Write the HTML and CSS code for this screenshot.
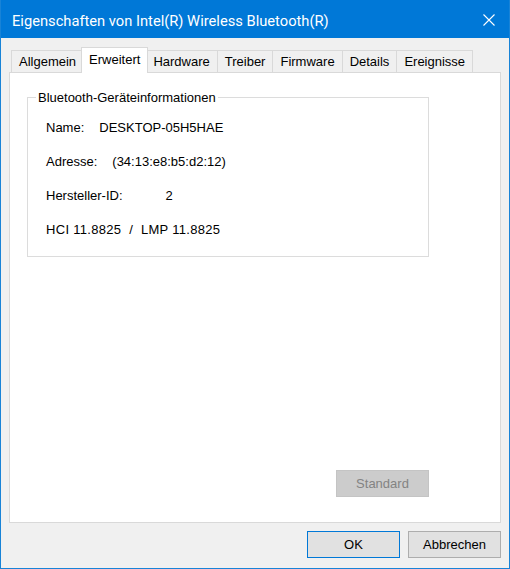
FILE: index.html
```html
<!DOCTYPE html>
<html lang="de">
<head>
  <meta charset="UTF-8">
  <meta name="viewport" content="width=device-width, initial-scale=1.0">
  <title>Eigenschaften von Intel(R) Wireless Bluetooth(R)</title>
  <link rel="stylesheet" href="styles.css">
</head>
<body>
  <div class="window">
    <div class="titlebar">
      <span class="title">Eigenschaften von Intel(R) Wireless Bluetooth(R)</span>
      <button class="close-btn" aria-label="Schließen">
        <svg width="12" height="12" viewBox="0 0 12 12">
          <path d="M0.5 0.5 L11.5 11.5 M11.5 0.5 L0.5 11.5" stroke="#fff" stroke-width="1.1" fill="none"/>
        </svg>
      </button>
    </div>

    <div class="dialog">
      <div class="tabs">
        <div class="tab">Allgemein</div>
        <div class="tab active">Erweitert</div>
        <div class="tab">Hardware</div>
        <div class="tab">Treiber</div>
        <div class="tab">Firmware</div>
        <div class="tab">Details</div>
        <div class="tab">Ereignisse</div>
      </div>

      <div class="panel">
        <fieldset class="group">
          <legend>Bluetooth-Geräteinformationen</legend>
          <div class="info">
            <div class="row"><span>Name:</span><span class="val">DESKTOP-05H5HAE</span></div>
            <div class="row"><span>Adresse:</span><span class="val">(34:13:e8:b5:d2:12)</span></div>
            <div class="row"><span>Hersteller-ID:</span><span class="val wide">2</span></div>
            <div class="row version">HCI 11.8825 &nbsp;/&nbsp; LMP 11.8825</div>
          </div>
        </fieldset>
        <button class="btn standard" disabled>Standard</button>
      </div>

      <div class="actions">
        <button class="btn default">OK</button>
        <button class="btn">Abbrechen</button>
      </div>
    </div>
  </div>
</body>
</html>
```

FILE: styles.css
```css
body {
  margin: 0;
  padding: 0;
  font-family: "Liberation Sans", Arial, sans-serif;
  font-size: 13px;
  color: #000;
  background-color: #fff;
}

.window {
  width: 510px;
  height: 569px;
  box-sizing: border-box;
  border: 1px solid #1883d7;
  border-top: none;
  background-color: #f0f0f0;
  display: flex;
  flex-direction: column;
}

/* Title bar */
.titlebar {
  height: 38px;
  flex-shrink: 0;
  background-color: #0078d7;
  display: flex;
  align-items: center;
  justify-content: space-between;
  padding: 3px 0 0 11px;
  box-sizing: border-box;
}

.title {
  font-family: Roboto, "Liberation Sans", sans-serif;
  font-size: 14.7px;
  color: #fff;
}

.close-btn {
  background: none;
  border: none;
  padding: 0;
  margin: 0 14px 2px 0;
  display: flex;
}

/* Dialog body */
.dialog {
  flex: 1;
  display: flex;
  flex-direction: column;
  padding: 9px 8px 10px;
}

.tabs {
  display: flex;
  align-items: flex-end;
  padding-left: 2px;
  height: 25px;
}

.tab {
  height: 22px;
  box-sizing: border-box;
  border: 1px solid #d9d9d9;
  border-bottom: none;
  padding: 0 7px;
  line-height: 21px;
  margin-right: -1px;
  background-color: #f0f0f0;
  white-space: nowrap;
}

.tab.active {
  position: relative;
  z-index: 1;
  height: 26px;
  line-height: 24px;
  margin: 0 -3px -1px -2px;
  background-color: #fff;
}

.panel {
  flex: 1;
  display: flex;
  flex-direction: column;
  background-color: #fff;
  border: 1px solid #d9d9d9;
  padding: 17px 71px 25px 17px;
}

.group {
  margin: 0;
  border: 1px solid #dcdcdc;
  padding: 15px 9px 19px;
  min-width: 0;
}

.group legend {
  padding: 0 2px;
  margin-left: -1px;
  line-height: 15px;
}

.info {
  display: flex;
  flex-direction: column;
  gap: 19px;
  padding-left: 9px;
  line-height: 15px;
}

.row {
  white-space: nowrap;
}

.row.version {
  letter-spacing: 0.3px;
}

.val {
  margin-left: 15px;
}

.val.wide {
  margin-left: 43px;
}

/* Buttons */
.btn {
  width: 93px;
  height: 27px;
  box-sizing: border-box;
  font-family: "Liberation Sans", Arial, sans-serif;
  font-size: 13px;
  color: #000;
  background-color: #e1e1e1;
  border: 1px solid #adadad;
  padding: 0;
}

.btn.default {
  border-color: #0078d7;
}

.btn.standard {
  margin-top: auto;
  align-self: flex-end;
  background-color: #cccccc;
  border-color: #c4c4c4;
  color: #838383;
}

.actions {
  display: flex;
  justify-content: flex-end;
  gap: 8px;
  margin-top: 8px;
}
```
